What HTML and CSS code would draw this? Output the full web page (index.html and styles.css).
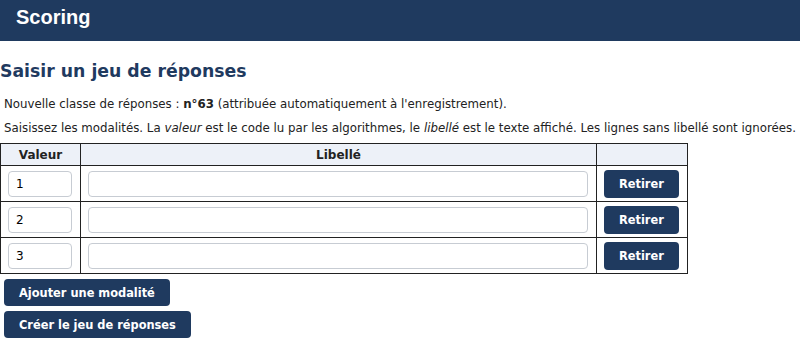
FILE: index.html
```html
<!DOCTYPE html>
<html lang="fr">
<head>
  <meta charset="UTF-8">
  <title>Scoring - Saisir un jeu de réponses</title>
  <link rel="stylesheet" href="styles.css">
</head>
<body>
  <!-- Bandeau -->
  <header class="topbar">Scoring</header>

  <main class="content">
    <h2>Saisir un jeu de réponses</h2>
    <p class="info">Nouvelle classe de réponses : <b>n°63</b> (attribuée automatiquement à l'enregistrement).</p>
    <p class="info">Saisissez les modalités. La <i>valeur</i> est le code lu par les algorithmes, le <i>libellé</i> est le texte affiché. Les lignes sans libellé sont ignorées.</p>

    <table class="modalites">
      <thead>
        <tr>
          <th class="col-val">Valeur</th>
          <th class="col-lib">Libellé</th>
          <th class="col-act"></th>
        </tr>
      </thead>
      <tbody>
        <tr>
          <td><input class="in-val" type="text" value="1"></td>
          <td><input class="in-lib" type="text"></td>
          <td><button class="btn">Retirer</button></td>
        </tr>
        <tr>
          <td><input class="in-val" type="text" value="2"></td>
          <td><input class="in-lib" type="text"></td>
          <td><button class="btn">Retirer</button></td>
        </tr>
        <tr>
          <td><input class="in-val" type="text" value="3"></td>
          <td><input class="in-lib" type="text"></td>
          <td><button class="btn">Retirer</button></td>
        </tr>
      </tbody>
    </table>

    <div class="actions">
      <button class="btn">Ajouter une modalité</button>
      <button class="btn">Créer le jeu de réponses</button>
    </div>
  </main>
</body>
</html>
```

FILE: styles.css
```css
/* Base */
* {
  box-sizing: border-box;
}
body {
  margin: 0;
  font-family: "DejaVu Sans", Verdana, sans-serif;
  font-size: 11.8px;
  color: #222;
  background: #fff;
}
/* Bandeau */
.topbar {
  height: 41px;
  background: #1f3a5f;
  color: #fff;
  font-family: "Liberation Sans", Arial, sans-serif;
  font-weight: bold;
  font-size: 20px;
  padding: 6px 16px;
}
/* Contenu */
h2 {
  margin: 20px 0 14px;
  font-size: 17.3px;
  color: #1f3a5f;
}
.info {
  margin: 0 0 6px 4px;
  line-height: 18px;
  white-space: nowrap;
}
/* Tableau des modalités */
.modalites {
  border-collapse: collapse;
  width: 688px;
  margin-top: 3px;
}
.modalites th,
.modalites td {
  border: 1px solid #222;
}
.modalites th {
  background: #edf1f8;
  height: 22px;
  padding: 0;
  font-size: 12px;
}
.modalites td {
  height: 36px;
  padding: 0 8px 0 7px;
}
.col-val { width: 79px; }
.col-act { width: 91px; }
.modalites input {
  height: 26px;
  border: 1px solid #c7ccd3;
  border-radius: 4px;
  padding: 0 7px;
  font-family: inherit;
  font-size: 12px;
  display: block;
}
.in-val { width: 64px; }
.in-lib { width: 100%; }
/* Boutons */
.btn {
  background: #1f3a5f;
  color: #fff;
  border: none;
  border-radius: 4px;
  height: 27px;
  padding: 0 15px;
  font-family: inherit;
  font-size: 11.4px;
  font-weight: bold;
  cursor: pointer;
}
.modalites .btn {
  height: 28px;
}
.actions {
  display: flex;
  flex-direction: column;
  align-items: flex-start;
  gap: 5px;
  margin: 5px 0 0 4px;
}
```
